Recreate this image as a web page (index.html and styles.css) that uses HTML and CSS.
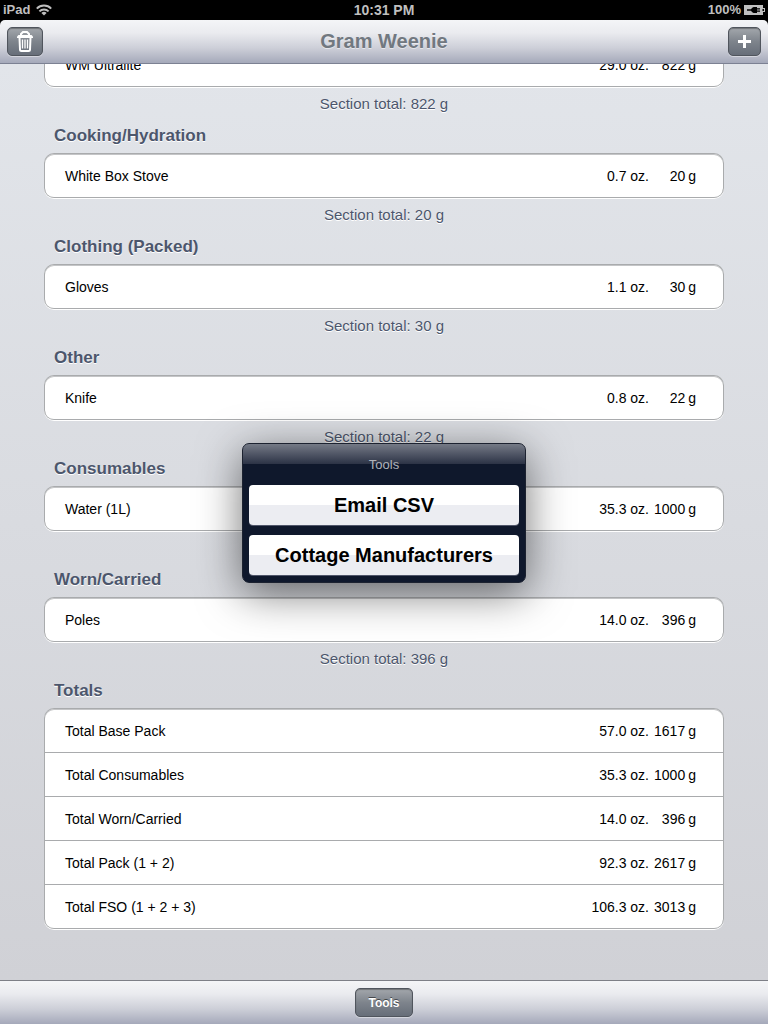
FILE: index.html
```
<!DOCTYPE html>
<html lang="en">
<head>
    <meta charset="UTF-8">
    <meta name="viewport" content="width=device-width, initial-scale=1.0">
    <title>Gram Weenie</title>
    <link rel="stylesheet" href="styles.css">
</head>
<body>
    <div class="status-bar">
        <div class="status-left">
            <span>iPad</span>
            <svg width="16" height="12" viewBox="0 0 16 12" fill="none" stroke="#bfbfbf" stroke-width="2">
                <path d="M0.8 4.6a10.2 10.2 0 0 1 14.4 0"/>
                <path d="M3.4 7.4a6.5 6.5 0 0 1 9.2 0"/>
                <path d="M8 11.6L5.4 9a3.7 3.7 0 0 1 5.2 0z" fill="#bfbfbf" stroke="none"/>
            </svg>
        </div>
        <div class="status-time">10:31 PM</div>
        <div class="status-right">
            <span>100%</span>
            <svg width="21" height="10" viewBox="0 0 21 10">
                <path d="M0 0h19v3h2v4h-2v3H0z" fill="#bfbfbf"/>
                <path d="M3 4.300h4C8 2.600 9 2 11 2h2v1.200h3v1.200h-3v1.200h3v1.200h-3V8h-2C9 8 8 7.400 7 5.700H3z" fill="#000"/>
                <path d="M18.500 4h1.500v2h-1.500z" fill="#000"/>
            </svg>
        </div>
    </div>

    <header class="nav-bar">
        <div class="nav-side">
            <button class="bar-button trash" aria-label="Delete">
                <svg width="16" height="21" viewBox="0 0 16 21" fill="none" stroke="#fff" stroke-width="2">
                    <path d="M4 4.500V3l2-2h4l2 2v1.500"/>
                    <path d="M0 7V5.500L1.500 4h13L16 5.500V7z" fill="#fff" stroke="none"/>
                    <path d="M2.500 6.500l0.500 12q0 1.500 1.500 1.500h7q1.500 0 1.500-1.500l0.500-12"/>
                    <path d="M5.500 8.500v9M8 8.500v9M10.500 8.500v9" stroke-width="1.300"/>
                </svg>
            </button>
        </div>
        <h1>Gram Weenie</h1>
        <div class="nav-side right">
            <button class="bar-button add" aria-label="Add">
                <svg width="13" height="13" viewBox="0 0 13 13" fill="#fff">
                    <path d="M5 0h3v5h5v3H8v5H5V8H0V5h5z"/>
                </svg>
            </button>
        </div>
    </header>

    <main class="list">
        <section>
            <table class="card">
                <tr><td>WM Ultralite</td><td class="oz">29.0 oz.</td><td class="g">822<span>g</span></td></tr>
            </table>
            <p class="section-total">Section total: 822 g</p>
        </section>

        <section>
            <h2>Cooking/Hydration</h2>
            <table class="card">
                <tr><td>White Box Stove</td><td class="oz">0.7 oz.</td><td class="g">20<span>g</span></td></tr>
            </table>
            <p class="section-total">Section total: 20 g</p>
        </section>

        <section>
            <h2>Clothing (Packed)</h2>
            <table class="card">
                <tr><td>Gloves</td><td class="oz">1.1 oz.</td><td class="g">30<span>g</span></td></tr>
            </table>
            <p class="section-total">Section total: 30 g</p>
        </section>

        <section>
            <h2>Other</h2>
            <table class="card">
                <tr><td>Knife</td><td class="oz">0.8 oz.</td><td class="g">22<span>g</span></td></tr>
            </table>
            <p class="section-total">Section total: 22 g</p>
        </section>

        <section>
            <h2>Consumables</h2>
            <table class="card">
                <tr><td>Water (1L)</td><td class="oz">35.3 oz.</td><td class="g">1000<span>g</span></td></tr>
            </table>
            <p class="section-total"></p>
        </section>

        <section>
            <h2>Worn/Carried</h2>
            <table class="card">
                <tr><td>Poles</td><td class="oz">14.0 oz.</td><td class="g">396<span>g</span></td></tr>
            </table>
            <p class="section-total">Section total: 396 g</p>
        </section>

        <section>
            <h2>Totals</h2>
            <table class="card">
                <tr><td>Total Base Pack</td><td class="oz">57.0 oz.</td><td class="g">1617<span>g</span></td></tr>
                <tr><td>Total Consumables</td><td class="oz">35.3 oz.</td><td class="g">1000<span>g</span></td></tr>
                <tr><td>Total Worn/Carried</td><td class="oz">14.0 oz.</td><td class="g">396<span>g</span></td></tr>
                <tr><td>Total Pack (1 + 2)</td><td class="oz">92.3 oz.</td><td class="g">2617<span>g</span></td></tr>
                <tr><td>Total FSO (1 + 2 + 3)</td><td class="oz">106.3 oz.</td><td class="g">3013<span>g</span></td></tr>
            </table>
        </section>
    </main>

    <footer class="toolbar">
        <button class="bar-button tools">Tools</button>
    </footer>

    <div class="overlay">
        <div class="sheet" role="dialog" aria-labelledby="sheetTitle">
            <div class="sheet-title" id="sheetTitle">Tools</div>
            <button>Email CSV</button>
            <button>Cottage Manufacturers</button>
        </div>
    </div>
</body>
</html>
```
FILE: styles.css
```
* {
    box-sizing: border-box;
}
body {
    margin: 0;
    height: 100vh;
    display: flex;
    flex-direction: column;
    overflow: hidden;
    background: #000;
    font-family: "Liberation Sans", Helvetica, Arial, sans-serif;
    font-size: 14px;
}
button {
    font-family: inherit;
    cursor: pointer;
}

/* status bar */
.status-bar {
    flex: none;
    height: 20px;
    padding: 0 3px;
    display: grid;
    grid-template-columns: 1fr auto 1fr;
    align-items: center;
    color: #bfbfbf;
    font-weight: bold;
    line-height: 20px;
}
.status-left,
.status-right {
    display: flex;
    align-items: center;
    gap: 6px;
    font-size: 13px;
}
.status-right {
    justify-content: flex-end;
    gap: 3px;
}

/* top and bottom bars */
.nav-bar,
.toolbar {
    flex: none;
    height: 44px;
    display: flex;
    align-items: center;
    background: linear-gradient(#f4f5f7, #eaebef 30%, #cdcfd8 65%, #a5a9ba);
}
.nav-bar {
    padding: 0 7px;
    border-bottom: 1px solid #7c8193;
    border-radius: 5px 5px 0 0;
}
.nav-bar h1 {
    margin: 0;
    color: #717880;
    font-size: 20px;
    text-shadow: 0 1px 0 rgba(255,255,255,0.5);
}
.nav-side {
    flex: 1;
    display: flex;
}
.nav-side.right {
    justify-content: flex-end;
}
.toolbar {
    justify-content: center;
    border-top: 1px solid #7d7f86;
}
.bar-button {
    height: 29px;
    padding: 0;
    display: flex;
    align-items: center;
    justify-content: center;
    border: 1px solid #50555d;
    border-radius: 5px;
    background: linear-gradient(#a3a7ac, #7e848c 50%, #676e79);
    box-shadow: inset 0 1px 1px rgba(0,0,0,0.3), 0 1px 0 rgba(255,255,255,0.4);
    color: #fff;
    font-size: 12px;
    font-weight: bold;
    text-shadow: 0 -1px 0 rgba(0,0,0,0.5);
}
.trash {
    width: 36px;
}
.add {
    width: 33px;
}
.tools {
    width: 58px;
}

/* list, scrolled to its end */
.list {
    flex: 1;
    min-height: 0;
    overflow: hidden;
    display: flex;
    flex-direction: column;
    justify-content: flex-end;
    padding: 0 44px 51px;
    background: linear-gradient(#e2e5ea, #d0d1d6);
}
.list section {
    flex: none;
}
.list h2 {
    margin: 0;
    padding: 0 10px;
    height: 33px;
    line-height: 31px;
    color: #4c566c;
    font-size: 17px;
    text-shadow: 0 1px 0 #fff;
}
.card {
    width: 100%;
    border-spacing: 0;
    border: 1px solid #a9abad;
    border-bottom: 0;
    border-radius: 10px;
    background: #fff;
    box-shadow: inset 0 1px 0 #c4c5c7, 0 1px 0 #fff;
}
.card td {
    height: 44px;
    padding: 0 0 0 20px;
    border-bottom: 1px solid #a9abad;
}
.card tr:last-child td:first-child {
    border-bottom-left-radius: 9px;
}
.card tr:last-child td:last-child {
    border-bottom-right-radius: 9px;
}
.card .oz {
    width: 100px;
    padding: 0;
    text-align: right;
}
.card .g {
    width: 74px;
    padding: 0 27px 0 0;
    text-align: right;
}
.g span {
    margin-left: 3px;
}
.section-total {
    margin: 0;
    height: 33px;
    line-height: 33px;
    color: #4c566c;
    font-size: 15px;
    text-align: center;
    text-shadow: 0 1px 0 #fff;
}

/* tools popup */
.overlay {
    position: absolute;
    inset: 0;
    display: flex;
    align-items: center;
    justify-content: center;
    padding-top: 2px;
}
.sheet {
    width: 284px;
    padding: 0 6px 7px;
    display: flex;
    flex-direction: column;
    gap: 10px;
    border: 1px solid #1c2230;
    border-radius: 7px;
    background: linear-gradient(#757a86, #2c3346 20px, #0f182c 20px, #0f182c);
    box-shadow: 0 10px 44px rgba(0,0,0,0.55);
}
.sheet-title {
    height: 31px;
    padding-top: 13px;
    color: #b0b3ba;
    font-size: 13px;
    line-height: 16px;
    text-align: center;
}
.sheet button {
    height: 40px;
    padding: 0;
    border: 0;
    border-radius: 4px;
    background: linear-gradient(#fff 50%, #ecedf2 50%);
    box-shadow: 0 1px 0 #50566a;
    color: #000;
    font-size: 20px;
    font-weight: bold;
}
```
